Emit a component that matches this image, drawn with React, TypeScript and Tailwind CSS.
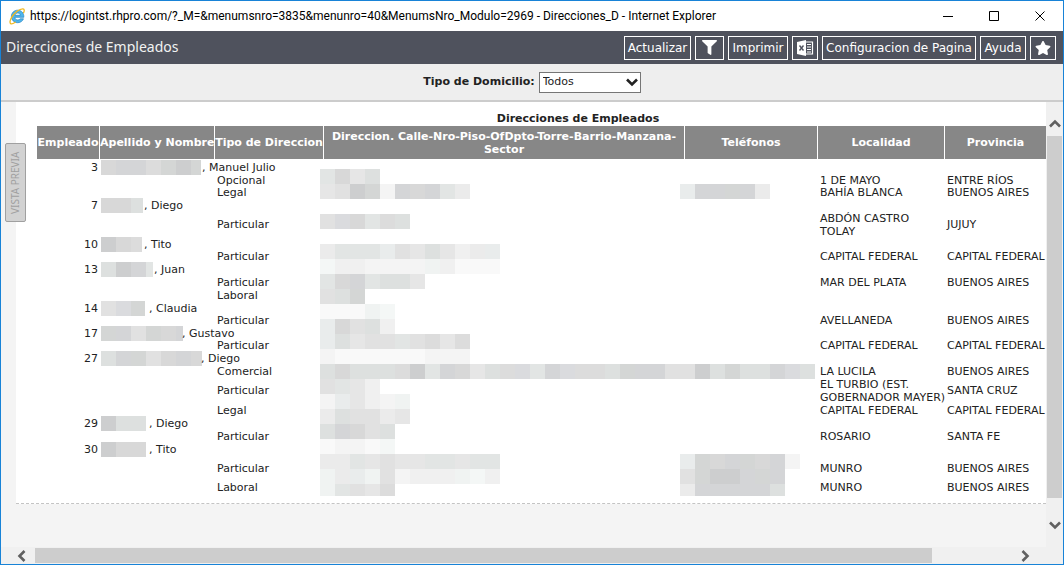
import { ReactNode } from 'react';
import { FaFilter, FaStar } from 'react-icons/fa';

// Shades used for the blurred-out personal data
const SHADES: Record<string, string> = {
  a: '#cdcecf',
  b: '#d4d5d7',
  c: '#d4d6d5',
  d: '#d8d8d8',
  e: '#dcdcdc',
  f: '#dde0df',
  g: '#e2e5e4',
  h: '#e1e1e1',
  i: '#e6e6e6',
  j: '#ebebeb',
  k: '#e9ecec',
  l: '#f0f0f0',
  m: '#f0f3f2',
  n: '#f4f4f4',
  o: '#f4f7f6',
  p: '#f9f9f9',
  q: '#dadbde',
};

const CELL = 15;

// [line, column, shades]
const MOSAIC: [number, number, string][] = [
  [0, 0, 'gdif'],
  [1, 0, 'ihacnbdbgj'],
  [1, 24, 'kbbcbj'],
  [3, 0, 'hqdgef'],
  [5, 0, 'jgggkhifiljk'],
  [6, 0, 'ollnnnnmlppp'],
  [7, 0, 'gdbgffi'],
  [8, 0, 'hfc'],
  [9, 0, 'pppmo'],
  [10, 0, 'kdhfl'],
  [11, 0, 'kfihhgheie'],
  [12, 0, 'nppppppnnn'],
  [13, 0, 'fdfffeagbdifeqgbqeefcbbhhafcffbqf'],
  [14, 0, 'hgil'],
  [15, 0, 'nkilnm'],
  [16, 0, 'jfhhji'],
  [17, 0, 'fbdhf'],
  [18, 0, 'pnnpo'],
  [19, 0, 'jjgihiiggigg'],
  [19, 24, 'kcdbcdbn'],
  [20, 0, 'mjkmhnlllmol'],
  [20, 24, 'hcaabcb'],
  [21, 0, 'mghie'],
  [21, 24, 'jbbbbbf'],
];

interface Row {
  h: string;
  id?: number;
  name?: string;
  slot?: number;
  bar?: number;
  shades?: string;
  kind?: string;
  city?: string[];
  province?: string;
}

const ROWS: Row[] = [
  { h: 'h-[13px]', id: 3, name: 'Manuel Julio', slot: 101, bar: 100, shades: 'dbbecac' },
  { h: 'h-[13px]', kind: 'Opcional', city: ['1 DE MAYO'], province: 'ENTRE RÍOS' },
  { h: 'h-3', kind: 'Legal', city: ['BAHÍA BLANCA'], province: 'BUENOS AIRES' },
  { h: 'h-[13px]', id: 7, name: 'Diego', slot: 43, bar: 42, shades: 'ddf' },
  { h: 'h-[26px]', kind: 'Particular', city: ['ABDÓN CASTRO', 'TOLAY'], province: 'JUJUY' },
  { h: 'h-[13px]', id: 10, name: 'Tito', slot: 43, bar: 41, shades: 'ade' },
  { h: 'h-3', kind: 'Particular', city: ['CAPITAL FEDERAL'], province: 'CAPITAL FEDERAL' },
  { h: 'h-[13px]', id: 13, name: 'Juan', slot: 53, bar: 52, shades: 'fabg' },
  { h: 'h-[13px]', kind: 'Particular', city: ['MAR DEL PLATA'], province: 'BUENOS AIRES' },
  { h: 'h-[13px]', kind: 'Laboral' },
  { h: 'h-[13px]', id: 14, name: 'Claudia', slot: 48, bar: 44, shades: 'hqc' },
  { h: 'h-3', kind: 'Particular', city: ['AVELLANEDA'], province: 'BUENOS AIRES' },
  { h: 'h-[13px]', id: 17, name: 'Gustavo', slot: 81, bar: 82, shades: 'cbhcdb' },
  { h: 'h-3', kind: 'Particular', city: ['CAPITAL FEDERAL'], province: 'CAPITAL FEDERAL' },
  { h: 'h-[13px]', id: 27, name: 'Diego', slot: 100, bar: 101, shades: 'fbchdbd' },
  { h: 'h-[13px]', kind: 'Comercial', city: ['LA LUCILA'], province: 'BUENOS AIRES' },
  { h: 'h-[26px]', kind: 'Particular', city: ['EL TURBIO (EST.', 'GOBERNADOR MAYER)'], province: 'SANTA CRUZ' },
  { h: 'h-[13px]', kind: 'Legal', city: ['CAPITAL FEDERAL'], province: 'CAPITAL FEDERAL' },
  { h: 'h-[13px]', id: 29, name: 'Diego', slot: 48, bar: 46, shades: 'aff' },
  { h: 'h-[13px]', kind: 'Particular', city: ['ROSARIO'], province: 'SANTA FE' },
  { h: 'h-[13px]', id: 30, name: 'Tito', slot: 48, bar: 45, shades: 'add' },
  { h: 'h-[25px]', kind: 'Particular', city: ['MUNRO'], province: 'BUENOS AIRES' },
  { h: 'h-[13px]', kind: 'Laboral', city: ['MUNRO'], province: 'BUENOS AIRES' },
];

const COLUMNS = [
  ['Empleado', 'w-[63px]', 'whitespace-nowrap'],
  ['Apellido y Nombre', 'w-[115px]', 'whitespace-nowrap'],
  ['Tipo de Direccion', 'w-[109px]', 'whitespace-nowrap'],
  ['Direccion. Calle-Nro-Piso-OfDpto-Torre-Barrio-Manzana-Sector', 'w-[361px]', ''],
  ['Teléfonos', 'w-[133px]', ''],
  ['Localidad', 'w-[127px]', ''],
  ['Provincia', 'w-[102px]', ''],
  ['', 'w-[72px]', ''],
] as const;

function IeLogo() {
  return (
    <svg width="17" height="17" viewBox="0 0 17 17" fill="none" aria-hidden="true">
      <path
        d="M8.6 2.2c-3.6 0-6.2 2.8-6.2 6.2 0 3.6 2.7 6.3 6.3 6.3 2.7 0 4.9-1.5 5.8-3.9h-3.4c-.5.8-1.3 1.2-2.3 1.2-1.6 0-2.8-1-2.9-2.7h8.9c.3-4.1-2.2-7.1-6.2-7.1Zm-2.6 5.100c.2-1.400 1.200-2.300 2.700-2.300s2.500.9 2.600 2.300H6Z"
        fill="#4fb4ea"
        stroke="#2384c4"
        strokeWidth=".7"
      />
      <path
        d="M14.6 4.7c1-2.2.8-3.7-.6-3.8C10.7.7 5.3 4.7 2.6 9.4.9 12.3.4 15.2 1.9 15.8c1 .4 2.6-.3 4.3-1.5"
        stroke="#f2b81e"
        strokeWidth="1.3"
        strokeLinecap="round"
      />
    </svg>
  );
}

function ExcelIcon() {
  return (
    <svg width="18" height="18" viewBox="0 0 18 18" aria-hidden="true">
      <path d="M1 3 10 1v16l-9-2V3Z" fill="#fff" />
      <path d="m3.5 6.5 4 5m0-5-4 5" stroke="#4f525d" strokeWidth="1.4" />
      <path d="M10 3h6.5v12H10M11 5.5h4M11 8h4m-4 2.5h4M11 13h4" stroke="#fff" strokeWidth="1.2" fill="none" />
    </svg>
  );
}

function Chevron({ className }: { className: string }) {
  return (
    <svg width="12" height="12" viewBox="0 0 12 12" fill="none" className={className} aria-hidden="true">
      <path d="m1 3.5 5 5 5-5" stroke="currentColor" strokeWidth="2.6" />
    </svg>
  );
}

function ToolButton({ label, className, children }: { label?: string; className: string; children: ReactNode }) {
  return (
    <button
      type="button"
      aria-label={label}
      className={`flex h-6 items-center justify-center whitespace-nowrap border border-white text-xs text-white ${className}`}
    >
      {children}
    </button>
  );
}

function NameBar({ slot, bar, shades }: { slot: number; bar: number; shades: string }) {
  return (
    <svg width={slot} height="15" className="-my-px shrink-0 overflow-visible" aria-hidden="true">
      {shades.split('').map((s, i) => (
        <rect key={i} x={i * CELL} width={Math.min(CELL, bar - i * CELL)} height="15" fill={SHADES[s]} />
      ))}
    </svg>
  );
}

function Report() {
  return (
    <table className="w-[1082px] table-fixed border-separate border-spacing-0 text-[11px] leading-3 text-[#222]">
      <caption className="pb-px text-center font-bold leading-[13px]">Direcciones de Empleados</caption>
      <colgroup>
        {COLUMNS.map(([title, width]) => (
          <col key={title} className={width} />
        ))}
      </colgroup>
      <thead>
        <tr className="h-[35px] leading-[13px] text-white">
          {COLUMNS.map(([title, , wrap]) => (
            <th key={title} className={`border-b-2 border-r border-white bg-[#878787] p-0 align-middle ${wrap}`}>
              {title}
            </th>
          ))}
        </tr>
      </thead>
      <tbody>
        {ROWS.map((row, i) => (
          <tr key={i} className={`${row.h} whitespace-nowrap`}>
            <td className="p-0 pr-0.5 text-right">{row.id}</td>
            <td className="p-0 pl-px">
              {row.name ? (
                <div className="flex h-[13px] items-center">
                  <NameBar slot={row.slot!} bar={row.bar!} shades={row.shades!} />
                  <span>, {row.name}</span>
                </div>
              ) : null}
            </td>
            <td className="p-0 pl-0.5">{row.kind}</td>
            <td className="p-0" />
            <td className="p-0" />
            <td className="p-0 pl-0.5">
              {row.city?.map((line) => (
                <div key={line} className={row.city!.length > 1 ? 'leading-[13px]' : ''}>
                  {line}
                </div>
              ))}
            </td>
            <td className="p-0 pl-0.5">{row.province}</td>
            <td className="p-0" />
          </tr>
        ))}
      </tbody>
    </table>
  );
}

export default function App() {
  return (
    <div className="flex min-h-screen flex-col overflow-hidden border border-[#1883d7] bg-[#f4f4f4] font-['DejaVu_Sans',sans-serif]">
      {/* Window title bar */}
      <header className="flex h-[30px] items-center bg-white pl-2 font-['Roboto',sans-serif] text-xs text-black">
        <IeLogo />
        <span className="ml-1 flex-1 truncate">
          https://logintst.rhpro.com/?_M=&amp;menumsnro=3835&amp;menunro=40&amp;MenumsNro_Modulo=2969 - Direcciones_D - Internet Explorer
        </span>
        <div className="flex">
          {[
            ['Minimizar', 'M0 5.5h10'],
            ['Maximizar', 'M.5.5h9v9h-9z'],
            ['Cerrar', 'm.5.5 9 9m0-9-9 9'],
          ].map(([label, d]) => (
            <button key={label} type="button" aria-label={label} className="flex h-7 w-[46px] items-center justify-center">
              <svg width="10" height="10" viewBox="0 0 10 10" fill="none" stroke="#000">
                <path d={d} />
              </svg>
            </button>
          ))}
        </div>
      </header>

      {/* Toolbar */}
      <div className="flex h-[33px] items-center justify-between bg-[#4f525d] pl-[5px] pr-[7px]">
        <h1 className="pb-0.5 font-['Noto_Sans',sans-serif] text-sm text-[#f2f2f2]">Direcciones de Empleados</h1>
        <div className="flex gap-1">
          <ToolButton className="w-[67px]">Actualizar</ToolButton>
          <ToolButton label="Filtrar" className="w-[29px]">
            <FaFilter size={15} />
          </ToolButton>
          <ToolButton className="w-[60px]">Imprimir</ToolButton>
          <ToolButton label="Exportar a Excel" className="w-[26px]">
            <ExcelIcon />
          </ToolButton>
          <ToolButton className="w-[154px]">Configuracion de Pagina</ToolButton>
          <ToolButton className="w-[46px]">Ayuda</ToolButton>
          <ToolButton label="Favoritos" className="w-[26px]">
            <FaStar size={16} />
          </ToolButton>
        </div>
      </div>

      {/* Filter */}
      <div className="flex h-[38px] items-center justify-center gap-1 border-b-2 border-[#ccc] bg-[#eee] text-[11px] text-[#222]">
        <label htmlFor="tipo" className="font-bold">
          Tipo de Domicilio:
        </label>
        <div className="relative">
          <select
            id="tipo"
            className="block h-[21px] w-[102px] appearance-none rounded-none border border-[#767676] bg-white pl-[3px] text-[11px]"
          >
            <option>Todos</option>
          </select>
          <Chevron className="pointer-events-none absolute right-[3px] top-1 text-[#222]" />
        </div>
      </div>

      {/* Report area with its scroll bars */}
      <div className="relative flex flex-1">
        <main className="min-w-0 flex-1 overflow-hidden pl-[15px]">
          <div className="relative overflow-hidden border-b border-dashed border-[#c4c4c4] bg-white pb-[9px] pl-[21px] pt-2.5">
            <Report />
            <svg width="500" height="327" className="absolute left-[304px] top-[67px]" aria-hidden="true">
              {MOSAIC.map(([line, col, shades]) =>
                shades
                  .split('')
                  .map((s, i) => (
                    <rect
                      key={`${line}-${col}-${i}`}
                      x={(col + i) * CELL}
                      y={line * CELL}
                      width={CELL}
                      height={CELL}
                      fill={SHADES[s]}
                    />
                  )),
              )}
            </svg>
          </div>
        </main>
        <div className="flex w-[17px] flex-col items-center bg-[#f0f0f0] pt-4 text-[#606060]">
          <Chevron className="rotate-180" />
          <div className="mt-1.5 h-[362px] w-[15px] bg-[#cdcdcd]" />
          <Chevron className="mb-4 mt-auto" />
        </div>
        <button
          type="button"
          className="absolute left-1 top-[41px] flex h-[79px] w-[21px] rotate-180 items-center justify-center whitespace-nowrap rounded-xs border border-[#a0a0a0] bg-[#d2d2d2] font-['Noto_Sans',sans-serif] text-[10px] text-[#a0a0a0] [writing-mode:vertical-rl]"
        >
          VISTA PREVIA
        </button>
      </div>
      <div className="flex h-[17px] items-center bg-[#f0f0f0] pl-[15px] pr-8 text-[#606060]">
        <Chevron className="rotate-90" />
        <div className="ml-[7px] h-[15px] w-[897px] bg-[#cdcdcd]" />
        <Chevron className="ml-auto -rotate-90" />
      </div>
    </div>
  );
}
